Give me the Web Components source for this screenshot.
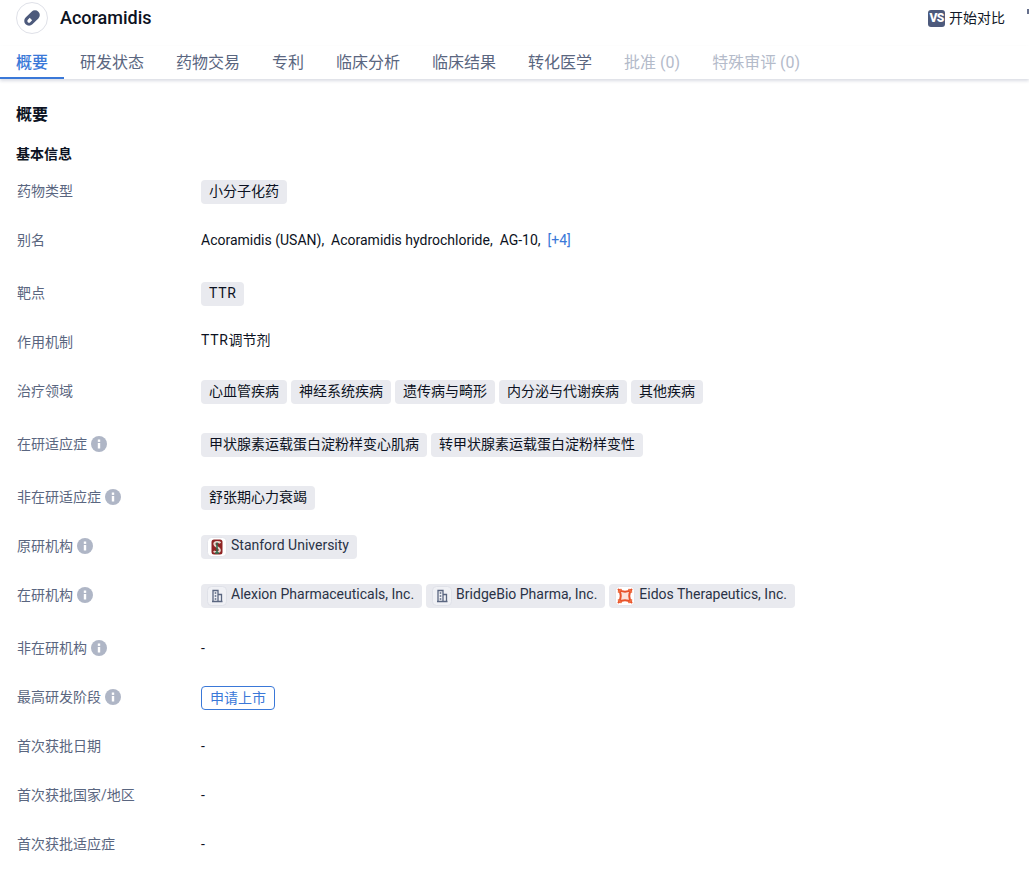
<!DOCTYPE html>
<html lang="zh"><head><meta charset="utf-8"><title>Acoramidis</title>
<style>
html,body{margin:0;padding:0;background:#fff;overflow:hidden;height:885px}
body{font-family:Roboto,"Noto Sans CJK SC",sans-serif;color:#020817}
</style></head><body>
<drug-page></drug-page>
<script>
const def=(n,css,html)=>{customElements.define(n,class extends HTMLElement{connectedCallback(){if(this.shadowRoot)return;const s=this.attachShadow({mode:'open'});s.innerHTML=`<style>${css}</style>`+(typeof html==='function'?html(this):html);}});};
def('drug-header',`:host{display:flex;align-items:flex-start;height:46px;padding:2px 16px 0;box-sizing:border-box}
.logo{width:32px;height:32px;border:1px solid #dfe1e8;border-radius:50%;box-sizing:border-box;display:flex;align-items:center;justify-content:center;margin-right:12px;flex:none}
h1{font:500 18px/32px Roboto,"Noto Sans CJK SC",sans-serif;margin:0;flex:1;color:#0c1222}
.cmp{display:flex;align-items:center;font-size:14px;gap:4px;margin:7px 8px 0 0;color:#111827;line-height:18px;height:18px}
.dot{position:absolute;left:1027px;top:9px;width:2px;height:5px;background:#66708c}
.vs{width:17px;height:17px;border-radius:3px;background:#4d5a7c;color:#fff;font:900 12px/17px Roboto,sans-serif;text-align:center;letter-spacing:-.6px}`,
`<div class="logo"><svg width="20" height="20" viewBox="0 0 20 20"><g transform="rotate(-45 10 10)"><rect x="1" y="5.200" width="18" height="9.600" rx="4.800" fill="#4d5a7c"/><path d="M8.500 8.300H5.800a1.700 1.700 0 0 0 0 3.400h2.700z" fill="#fff"/></g></svg></div><h1>Acoramidis</h1><div class="cmp"><span class="vs">VS</span><span>开始对比</span></div><span class="dot"></span>`);
def('drug-tab',`:host{display:block;padding:0 16px;height:33px;line-height:34px;font-size:16px;color:#5a6680;box-sizing:border-box;border-bottom:2px solid transparent;white-space:nowrap}
:host([active]){color:#3a78d8;border-bottom-color:#3a78d8;font-weight:500}
:host([disabled]){color:#b4bbca}`,`<slot></slot>`);
def('drug-tabs',`:host{display:flex;height:33px;box-shadow:0 2px 3px rgba(90,100,130,.22);box-sizing:border-box}`,`<slot></slot>`);
def('info-row',`:host{display:flex;padding:12px 16px 13px 17px;align-items:flex-start;font-size:14px;line-height:24px}
:host([tall]){padding-bottom:17px}
.l{width:184px;flex:none;color:#5a6680;display:flex;align-items:center;height:24px;font-size:14px}
.v{flex:1;display:flex;gap:4px;align-items:center;height:24px;color:#0c1222;font-size:14px}
:host([lift]) .v{margin-top:-2px}
.i{width:16px;height:16px;margin-left:4px}`,
h=>`<div class="l">${h.getAttribute('label')}${h.hasAttribute('info')?`<svg class="i" viewBox="0 0 16 16"><circle cx="8" cy="8" r="8" fill="#afb6c6"/><rect x="6.800" y="3.500" width="2.400" height="2.400" fill="#fff"/><rect x="6.800" y="7" width="2.400" height="5.500" fill="#fff"/></svg>`:''}</div><div class="v"><slot></slot></div>`);
def('info-tag',`:host{display:inline-block;height:24px;margin-top:2px;padding:0 8px;background:#e9eaef;border-radius:4px;font-size:14px;line-height:22px;color:#0c1222;white-space:nowrap;box-sizing:border-box}`,`<slot></slot>`);
def('org-tag',`:host{display:inline-flex;align-items:flex-start;height:24px;margin-top:2px;padding:0 8px 0 5px;background:#e9eaef;border-radius:4px;font-size:14px;line-height:20px;color:#2a3246;white-space:nowrap;box-sizing:border-box;gap:3px}
svg{width:22px;height:22px;flex:none;margin-top:1px}`,
h=>{const k=h.getAttribute('kind');let svg;
if(k==='s')svg=`<svg viewBox="0 0 22 22"><rect x="1.500" y="1.500" width="19" height="19" rx="4" fill="#fff" stroke="#e3e4ea"/><rect x="5.500" y="3.500" width="11" height="15" rx="2.500" fill="#8f2424"/><path d="M14.500 7C13 5.500 8.300 5.500 8.300 8c0 2.800 5.600 2.800 5.600 6 0 2.700-4.500 2.700-6.300 1.300" fill="none" stroke="#e4d6cc" stroke-width="2"/><path d="M11 6.500v10M9 17h4" stroke="#2d6a4a" stroke-width="1.500"/></svg>`;
else if(k==='e')svg=`<svg viewBox="0 0 22 22"><rect x="1.500" y="1.500" width="19" height="19" rx="4" fill="#fff" stroke="#e3e4ea"/><path d="M4.500 4.500Q11 9 17.500 4.500Q13 11 17.500 17.500Q11 13 4.500 17.500Q9 11 4.500 4.500z" fill="#fbe3da" stroke="#e8522a" stroke-width="2" stroke-linejoin="round"/><path d="M4 7.500L7.500 4M14.500 4L18 7.500M4 14.500L7.500 18M14.500 18L18 14.500" stroke="#ef7043" stroke-width="1.600"/></svg>`;
else svg=`<svg viewBox="0 0 22 22"><rect x="1.500" y="1.500" width="19" height="19" rx="4" fill="#f0f1f5" stroke="#dfe1e8"/><path d="M7 16.500V5.500h5v11M12 9.500h3.500v7M6 16.500h10.500M8.700 8h1.600M8.700 11h1.600M8.700 14h1.600" fill="none" stroke="#5a6680" stroke-width="1.300"/></svg>`;
return svg+`<span><slot></slot></span>`;});
def('phase-tag',`:host{display:inline-block;height:24px;margin-top:2px;line-height:22px;padding:0 9px;border:1px solid #3a78d8;border-radius:4px;color:#3a78d8;font-size:14px;box-sizing:border-box;white-space:nowrap;padding:0 8px}`,`<slot></slot>`);
def('section-head',`:host{display:block;font-weight:700;color:#0c1222}
:host([lv="1"]){font-size:16px;line-height:24px;padding:0 16px;margin-top:24px}
:host([lv="2"]){font-size:14px;line-height:20px;padding:0 16px;margin-top:17px;margin-bottom:3px}`,`<slot></slot>`);
def('drug-page',`:host{display:block;width:1029px}
a{color:#3a78d8;text-decoration:none}
.ls{letter-spacing:.7px}
info-tag.ls{padding:0 7.500px 0 8px}`,`
<drug-header></drug-header>
<drug-tabs><drug-tab active>概要</drug-tab><drug-tab>研发状态</drug-tab><drug-tab>药物交易</drug-tab><drug-tab>专利</drug-tab><drug-tab>临床分析</drug-tab><drug-tab>临床结果</drug-tab><drug-tab>转化医学</drug-tab><drug-tab disabled>批准 (0)</drug-tab><drug-tab disabled>特殊审评 (0)</drug-tab></drug-tabs>
<section-head lv="1">概要</section-head>
<section-head lv="2">基本信息</section-head>
<info-row label="药物类型"><info-tag>小分子化药</info-tag></info-row>
<info-row tall label="别名"><span>Acoramidis (USAN),&nbsp; Acoramidis hydrochloride,&nbsp; AG-10,&nbsp; <a>[+4]</a></span></info-row>
<info-row label="靶点"><info-tag class="ls">TTR</info-tag></info-row>
<info-row lift label="作用机制"><span><span class="ls">TTR</span>调节剂</span></info-row>
<info-row tall label="治疗领域"><info-tag>心血管疾病</info-tag><info-tag>神经系统疾病</info-tag><info-tag>遗传病与畸形</info-tag><info-tag>内分泌与代谢疾病</info-tag><info-tag>其他疾病</info-tag></info-row>
<info-row tall info label="在研适应症"><info-tag>甲状腺素运载蛋白淀粉样变心肌病</info-tag><info-tag>转甲状腺素运载蛋白淀粉样变性</info-tag></info-row>
<info-row info label="非在研适应症"><info-tag>舒张期心力衰竭</info-tag></info-row>
<info-row info label="原研机构"><org-tag kind="s">Stanford University</org-tag></info-row>
<info-row tall info label="在研机构"><org-tag>Alexion Pharmaceuticals, Inc.</org-tag><org-tag>BridgeBio Pharma, Inc.</org-tag><org-tag kind="e">Eidos Therapeutics, Inc.</org-tag></info-row>
<info-row info label="非在研机构">-</info-row>
<info-row info label="最高研发阶段"><phase-tag>申请上市</phase-tag></info-row>
<info-row label="首次获批日期">-</info-row>
<info-row label="首次获批国家/地区">-</info-row>
<info-row label="首次获批适应症">-</info-row>`);
</script>
</body></html>
